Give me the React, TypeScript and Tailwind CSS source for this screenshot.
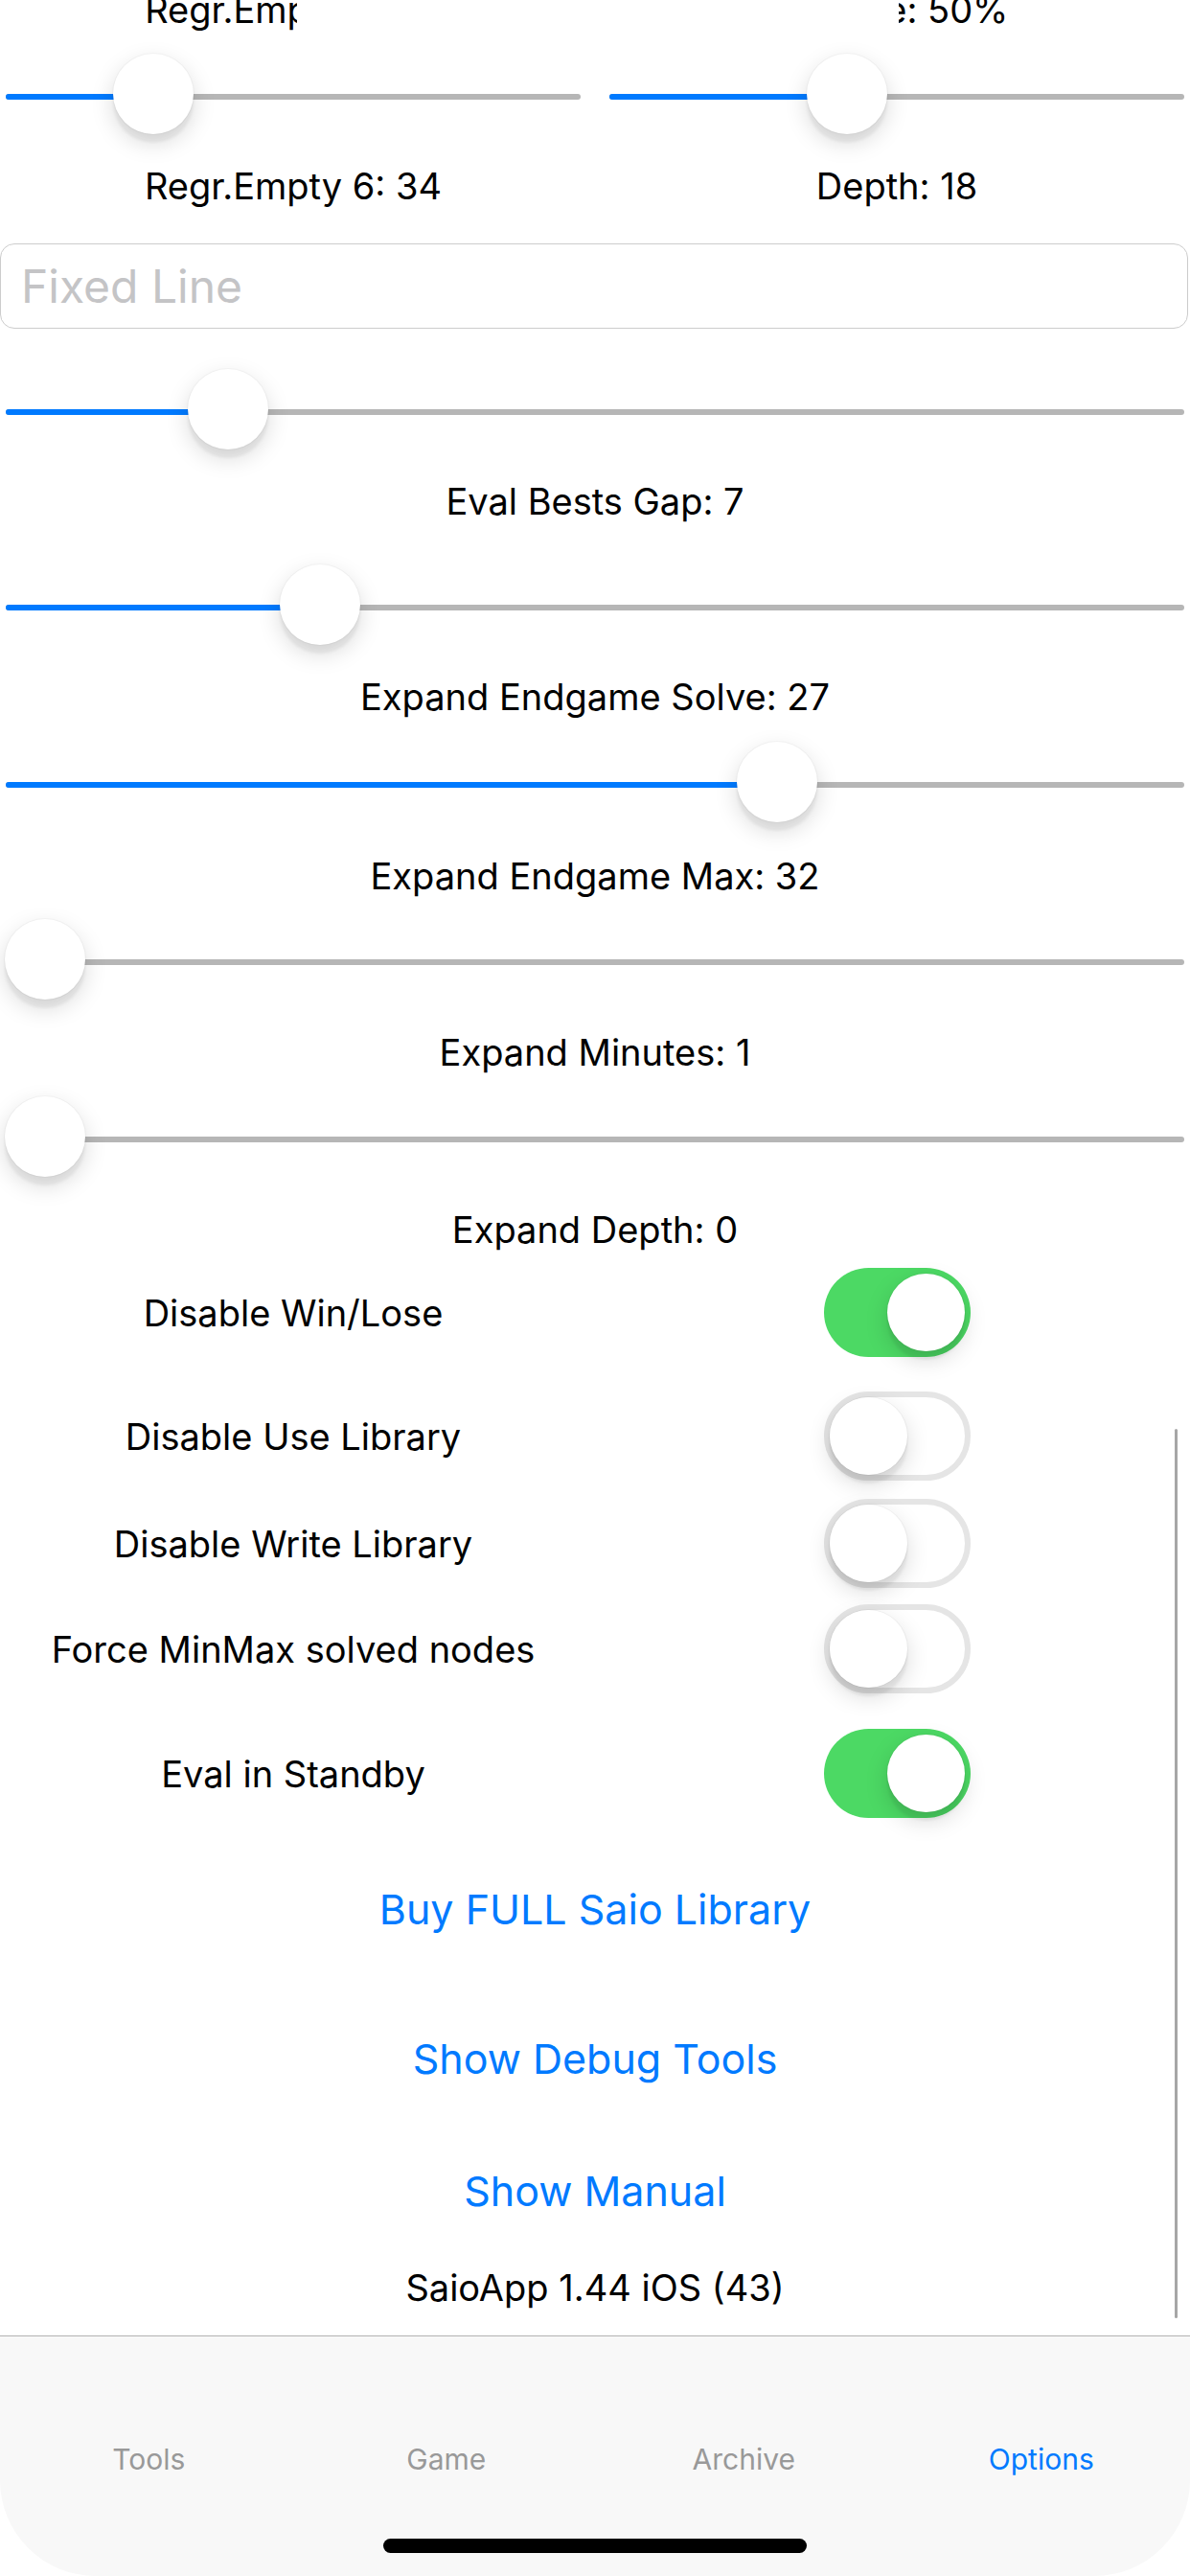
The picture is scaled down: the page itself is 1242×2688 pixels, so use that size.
import React from 'react';

// thumb centre is measured from the left edge of each slider's track
function Slider({ thumb, width }: { thumb: number; width: number }) {
  return (
    <div className="relative h-[84px] w-full">
      <div className="absolute left-0 right-0 top-[42px] h-[6px] rounded-full bg-[#b6b6b6]" />
      <div
        className="absolute left-0 top-[42px] h-[6px] rounded-l-full bg-[#007aff]"
        style={{ width: Math.max(0, Math.min(thumb, width)) }}
      />
      <div
        className="absolute top-0 h-[84px] w-[84px] rounded-full bg-white shadow-[0_9px_24px_rgba(0,0,0,0.15),0_9px_3px_rgba(0,0,0,0.05),0_0_0_1px_rgba(0,0,0,0.03)]"
        style={{ left: thumb - 42 }}
      />
    </div>
  );
}

function Label({ text, className = '' }: { text: string; className?: string }) {
  return (
    <div className={`h-[46px] whitespace-nowrap text-center text-[38px] leading-[46px] text-black ${className}`}>
      {text}
    </div>
  );
}

function Toggle({ on }: { on: boolean }) {
  const knob =
    'h-[81px] w-[81px] rounded-full bg-white shadow-[0_9px_24px_rgba(0,0,0,0.15),0_9px_3px_rgba(0,0,0,0.06),0_0_0_1px_rgba(0,0,0,0.04)]';
  if (on) {
    return (
      <div className="flex h-[93px] w-[153px] items-center justify-end rounded-full bg-[#4cd964] px-[6px]">
        <div className={knob} />
      </div>
    );
  }
  return (
    <div className="flex h-[93px] w-[153px] items-center justify-start rounded-full border-[6px] border-[#e5e5e5] bg-white">
      <div className={knob} />
    </div>
  );
}

function ToggleRow({ label, on, className = '' }: { label: string; on: boolean; className?: string }) {
  return (
    <div className={`grid h-[93px] grid-cols-2 items-center gap-[30px] ${className}`}>
      <div className="whitespace-nowrap text-center text-[38px] leading-[46px] text-black">{label}</div>
      <div className="flex justify-center">
        <Toggle on={on} />
      </div>
    </div>
  );
}

export default function App() {
  return (
    <div className="flex h-[2688px] w-[1242px] flex-col overflow-hidden bg-white font-['Inter','Noto_Sans',sans-serif]">
      {/* Scrolling options */}
      <div className="relative h-[2437px] overflow-hidden">
        <div className="flex flex-col px-[6px]">
          {/* labels half hidden by the row above */}
          <div className="mt-[-13px] grid grid-cols-2 gap-[30px]">
            <div className="w-[304px] overflow-hidden">
              <Label text="Regr.Empty 5: 34" className="w-[600px]" />
            </div>
            <div className="ml-[302px] w-[298px] overflow-hidden">
              <Label text="Noise: 50%" className="ml-[-290px] w-[600px]" />
            </div>
          </div>

          <div className="mt-[23px] grid grid-cols-2 gap-[30px]">
            <Slider thumb={154} width={600} />
            <Slider thumb={248} width={600} />
          </div>

          <div className="mt-[31px] grid grid-cols-2 gap-[30px]">
            <Label text="Regr.Empty 6: 34" />
            <Label text="Depth: 18" />
          </div>

          <div className="ml-[-6px] mr-[-4px] mt-[37px] flex h-[89px] items-center rounded-[15px] border border-[#cccccc] px-[21px]">
            <input
              type="text"
              placeholder="Fixed Line"
              className="w-full bg-transparent text-[48px] text-black outline-none placeholder:text-[#c4c4c6]"
            />
          </div>

          <div className="mt-[42px]">
            <Slider thumb={232} width={1230} />
          </div>
          <Label text="Eval Bests Gap: 7" className="mt-[31px]" />

          <div className="mt-[43px]">
            <Slider thumb={328} width={1230} />
          </div>
          <Label text="Expand Endgame Solve: 27" className="mt-[31px]" />

          <div className="mt-[24px]">
            <Slider thumb={805} width={1230} />
          </div>
          <Label text="Expand Endgame Max: 32" className="mt-[33px]" />

          <div className="mt-[22px]">
            <Slider thumb={41} width={1230} />
          </div>
          <Label text="Expand Minutes: 1" className="mt-[32px]" />

          <div className="mt-[23px]">
            <Slider thumb={41} width={1230} />
          </div>
          <Label text="Expand Depth: 0" className="mt-[32px]" />

          <ToggleRow label="Disable Win/Lose" on className="mt-[17px]" />
          <ToggleRow label="Disable Use Library" on={false} className="mt-[36px]" />
          <ToggleRow label="Disable Write Library" on={false} className="mt-[19px]" />
          <ToggleRow label="Force MinMax solved nodes" on={false} className="mt-[17px]" />
          <ToggleRow label="Eval in Standby" on className="mt-[37px]" />

          <div className="mt-[68px] h-[54px] text-center text-[43px] leading-[54px] text-[#007aff]">
            Buy FULL Saio Library
          </div>
          <div className="mt-[102px] h-[54px] text-center text-[43px] leading-[54px] text-[#007aff]">
            Show Debug Tools
          </div>
          <div className="mt-[84px] h-[54px] text-center text-[43px] leading-[54px] text-[#007aff]">
            Show Manual
          </div>
          <Label text="SaioApp 1.44 iOS (43)" className="mt-[51px]" />
        </div>

        {/* scroll indicator */}
        <div className="absolute left-[1226px] top-[1491px] h-[928px] w-[3px] rounded-full bg-[#a6a6a6]" />
      </div>

      <div className="h-px bg-[#b2b2b2]" />

      {/* Tab bar */}
      <div className="flex h-[250px] flex-col rounded-b-[100px] bg-[#f8f8f8]">
        <div className="mt-[110px] grid grid-cols-4 text-center text-[30px] leading-[36px]">
          <div className="text-[#999999]">Tools</div>
          <div className="text-[#999999]">Game</div>
          <div className="text-[#999999]">Archive</div>
          <div className="text-[#007aff]">Options</div>
        </div>
        <div className="mt-[65px] flex justify-center">
          <div className="h-[15px] w-[442px] rounded-full bg-black" />
        </div>
      </div>
    </div>
  );
}
